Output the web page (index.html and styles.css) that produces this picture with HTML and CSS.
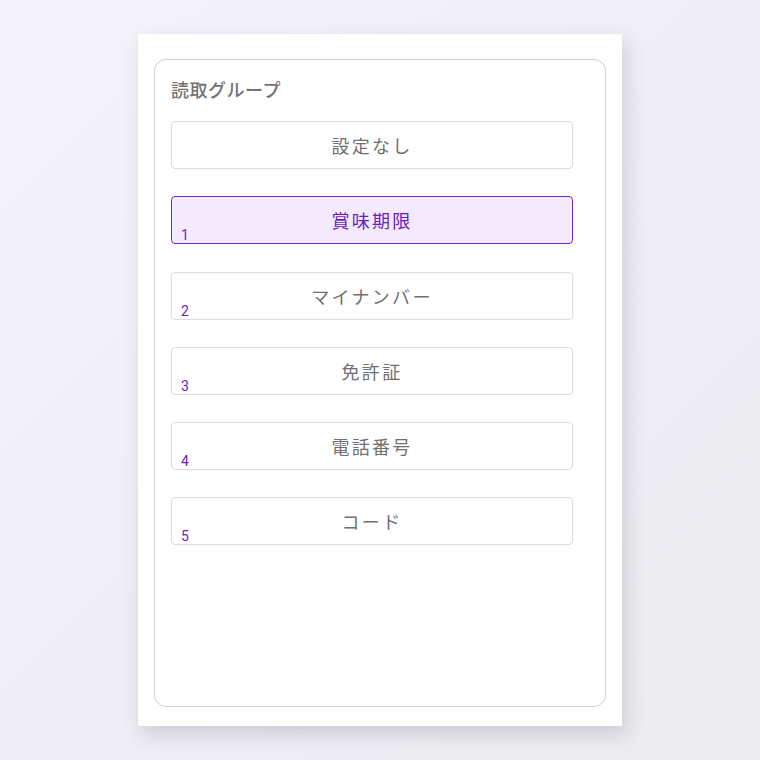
FILE: index.html
```html
<!DOCTYPE html>
<html lang="ja">
<head>
<meta charset="utf-8">
<link rel="stylesheet" href="styles.css">
</head>
<body>
<div class="card">
  <div class="group">
    <div class="title">読取グループ</div>
    <div class="list">
      <button class="opt">設定なし</button>
      <button class="opt selected">賞味期限<span class="num">1</span></button>
      <button class="opt">マイナンバー<span class="num">2</span></button>
      <button class="opt">免許証<span class="num">3</span></button>
      <button class="opt">電話番号<span class="num">4</span></button>
      <button class="opt">コード<span class="num">5</span></button>
    </div>
  </div>
</div>
</body>
</html>
```
FILE: styles.css
```css
html, body {
  margin: 0;
  padding: 0;
  width: 760px;
  height: 760px;
}
body {
  background: linear-gradient(135deg, #f5f4fc 0%, #efeef5 50%, #ebebf0 100%);
  font-family: "Noto Sans CJK JP", "Noto Sans", sans-serif;
  padding-top: 34px;
  padding-left: 138px;
  box-sizing: border-box;
}
.card {
  width: 484px;
  height: 692px;
  background: #fff;
  box-sizing: border-box;
  padding: 25px 16px 19px 16px;
  box-shadow: 4px 8px 18px rgba(60, 60, 80, 0.18);
}
.group {
  height: 100%;
  box-sizing: border-box;
  border: 1px solid #cfcfcf;
  border-radius: 12px;
  padding: 17px 32px 0 16px;
}
.title {
  font-size: 18px;
  line-height: 24px;
  font-weight: 500;
  color: #737373;
  letter-spacing: 0.5px;
}
.list {
  margin-top: 20px;
  display: flex;
  flex-direction: column;
  gap: 27.3px;
}
.opt {
  position: relative;
  display: block;
  width: 402px;
  height: 48px;
  margin: 0;
  padding: 0;
  background: #fff;
  border: 1px solid #dcdcdc;
  border-radius: 4px;
  font-family: "Noto Sans CJK JP", "Noto Sans", sans-serif;
  font-size: 18px;
  letter-spacing: 2.3px;
  color: #707070;
  text-align: center;
  cursor: pointer;
}
.opt.selected {
  background: #f3ebfd;
  border-color: #7327cf;
  color: #6a1cc6;
}
.num {
  position: absolute;
  left: 9px;
  bottom: 0;
  font-family: Roboto, "Noto Sans", sans-serif;
  font-size: 14px;
  line-height: 16px;
  letter-spacing: 0;
  color: #6a1cc6;
}
```
